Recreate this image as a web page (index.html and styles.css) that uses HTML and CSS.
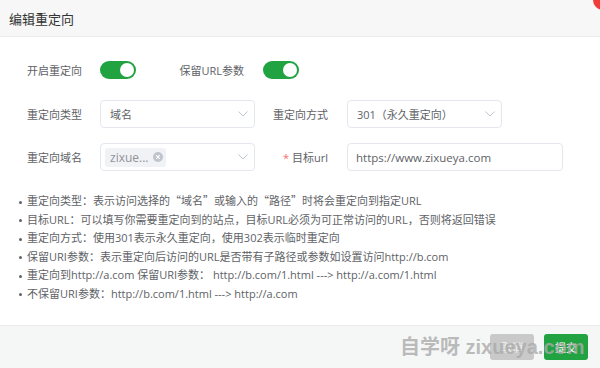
FILE: index.html
```html
<!DOCTYPE html>
<html lang="zh-CN">
<head>
<meta charset="utf-8">
<title>编辑重定向</title>
<link rel="stylesheet" href="styles.css">
</head>
<body>
<div class="dialog">
  <div class="header">编辑重定向</div>
  <span class="close-dot"></span>
  <div class="content">
    <div class="row row-switch">
      <label class="lbl">开启重定向</label>
      <span class="switch"><span class="knob"></span></span>
      <label class="lbl lbl-b1">保留URL参数</label>
      <span class="switch"><span class="knob"></span></span>
    </div>
    <div class="row row-2">
      <label class="lbl">重定向类型</label>
      <div class="select">
        <span class="val">域名</span>
        <svg class="chev" width="10" height="6" viewBox="0 0 10 6"><polyline points="0.5,0.5 5,5 9.5,0.5" fill="none" stroke="#c0c4cc" stroke-width="1"/></svg>
      </div>
      <label class="lbl lbl-b">重定向方式</label>
      <div class="select">
        <span class="val">301（永久重定向）</span>
        <svg class="chev" width="10" height="6" viewBox="0 0 10 6"><polyline points="0.5,0.5 5,5 9.5,0.5" fill="none" stroke="#c0c4cc" stroke-width="1"/></svg>
      </div>
    </div>
    <div class="row row-3">
      <label class="lbl">重定向域名</label>
      <div class="select select-tags">
        <span class="tag">zixue...<span class="tag-x"><svg width="10" height="10" viewBox="0 0 10 10"><circle cx="5" cy="5" r="5" fill="#c0c4cc"/><path d="M3.2 3.2 L6.8 6.8 M6.8 3.2 L3.2 6.8" stroke="#fff" stroke-width="1.1"/></svg></span></span>
        <svg class="chev" width="10" height="6" viewBox="0 0 10 6"><polyline points="0.5,0.5 5,5 9.5,0.5" fill="none" stroke="#c0c4cc" stroke-width="1"/></svg>
      </div>
      <label class="lbl lbl-b"><span class="req">*</span> 目标url</label>
      <div class="input">https://www.zixueya.com</div>
    </div>
    <ul class="tips">
      <li>重定向类型：表示访问选择的<span class="q">“域名”</span>或输入的<span class="q">“路径”</span>时将会重定向到指定URL</li>
      <li>目标URL：可以填写你需要重定向到的站点，目标URL必须为可正常访问的URL，否则将返回错误</li>
      <li>重定向方式：使用301表示永久重定向，使用302表示临时重定向</li>
      <li>保留URI参数：表示重定向后访问的URL是否带有子路径或参数如设置访问http://b.com</li>
      <li>重定向到http://a.com 保留URI参数： http://b.com/1.html ---&gt; http://a.com/1.html</li>
      <li>不保留URI参数：http://b.com/1.html ---&gt; http://a.com</li>
    </ul>
  </div>
  <div class="footer">
    <button class="btn btn-cancel">取消</button>
    <button class="btn btn-ok">提交</button>
  </div>
  <div class="watermark">自学呀 zixueya.com</div>
</div>
</body>
</html>
```
FILE: styles.css
```css
html, body {
  margin: 0;
  padding: 0;
  background: #fff;
}
body {
  font-family: "Open Sans", "Noto Sans CJK SC", sans-serif;
  font-size: 11px;
  color: #606266;
}
.dialog {
  position: relative;
  width: 600px;
  height: 368px;
  overflow: hidden;
  display: flex;
  flex-direction: column;
  background: #fff;
}
.header {
  height: 36px;
  flex: none;
  display: flex;
  align-items: center;
  padding-left: 9px;
  background: #f7f7f7;
  border-bottom: 1px solid #ececec;
  font-size: 13px;
  color: #333;
}
.close-dot {
  position: absolute;
  top: -10px;
  right: -13px;
  width: 20px;
  height: 20px;
  border-radius: 50%;
  background: #f23c3c;
}
.content {
  flex: 1;
}
.row {
  display: flex;
  align-items: center;
}
.row-switch {
  margin-top: 24px;
  height: 18px;
}
.row-2 {
  margin-top: 21px;
}
.row-3 {
  margin-top: 15px;
}
.lbl {
  width: 100px;
  box-sizing: border-box;
  padding-right: 18px;
  text-align: right;
  flex: none;
  color: #606266;
}
.lbl-b1 {
  width: 127px;
  padding-right: 19px;
}
.lbl-b {
  width: 92px;
  padding-right: 19px;
}
.req {
  color: #f56c6c;
}
.switch {
  width: 36px;
  height: 18px;
  border-radius: 9px;
  background: #22a341;
  display: flex;
  align-items: center;
  justify-content: flex-end;
  padding-right: 2px;
  box-sizing: border-box;
  flex: none;
}
.knob {
  width: 14px;
  height: 14px;
  border-radius: 50%;
  background: #fff;
}
.select, .input {
  height: 28px;
  box-sizing: border-box;
  border: 1px solid #e4e7ed;
  border-radius: 4px;
  display: flex;
  align-items: center;
  flex: none;
  background: #fff;
}
.select {
  width: 155px;
  padding: 0 6px 0 9px;
  justify-content: space-between;
}
.select-tags {
  padding-left: 4px;
}
.input {
  width: 216px;
  padding-left: 8px;
  color: #606266;
  font-size: 11.5px;
}
.val {
  color: #606266;
}
.chev {
  display: block;
}
.tag {
  display: flex;
  align-items: center;
  height: 19px;
  padding: 0 3px 0 5px;
  border-radius: 3px;
  background: #f0f2f5;
  color: #909399;
  font-size: 12px;
}
.tag-x {
  display: flex;
  margin-left: 4px;
}
.tips {
  list-style: none;
  margin: 20px 0 0 0;
  padding: 0 0 0 19px;
}
.tips li {
  line-height: 18.5px;
  white-space: nowrap;
}
.tips li::before {
  content: "";
  display: inline-block;
  width: 3px;
  height: 3px;
  border-radius: 50%;
  background: #606266;
  margin-right: 5px;
  vertical-align: middle;
}
.q {
  font-family: "Noto Sans CJK SC", sans-serif;
}
.footer {
  flex: none;
  height: 42px;
  border-top: 1px solid #ececec;
  background: #f5f7f7;
  display: flex;
  align-items: center;
  justify-content: flex-end;
  gap: 10px;
  padding-right: 12px;
}
.btn {
  width: 44px;
  height: 26px;
  border: none;
  border-radius: 3px;
  font-family: "Noto Sans CJK SC", sans-serif;
  font-size: 11px;
  color: #fff;
  padding: 0;
}
.btn-cancel {
  background: #c9c9c9;
  color: #f2f2f2;
}
.btn-ok {
  background: #22a341;
}
.watermark {
  position: absolute;
  left: 400px;
  top: 333px;
  font-family: "Liberation Sans", "Noto Sans CJK SC", sans-serif;
  font-weight: bold;
  font-size: 20px;
  line-height: 28px;
  color: rgba(170, 170, 170, 0.8);
  white-space: nowrap;
}
```
